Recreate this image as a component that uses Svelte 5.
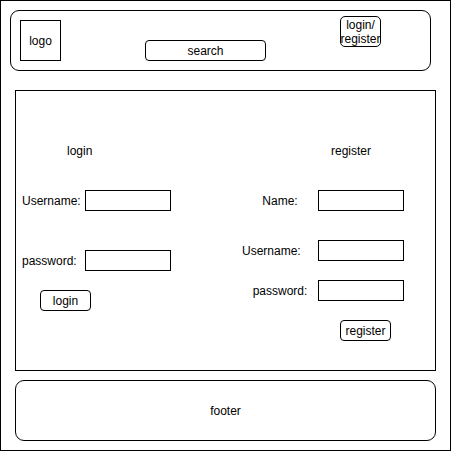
<script>
  const loginFields = [
    { id: 'login-username', label: 'Username:', type: 'text' },
    { id: 'login-password', label: 'password:', type: 'password' },
  ];
  const registerFields = [
    { id: 'register-name', label: 'Name:', type: 'text' },
    { id: 'register-username', label: 'Username:', type: 'text' },
    { id: 'register-password', label: 'password:', type: 'password' },
  ];
  const submit = (event) => event.preventDefault();
</script>

<div class="page">
  <header>
    <div class="logo">logo</div>
    <input class="search" type="text" placeholder="search" aria-label="search" />
    <button class="account" type="button">login/<br />register</button>
  </header>

  <main>
    <form class="login" onsubmit={submit}>
      <h2>login</h2>
      {#each loginFields as field}
        <div class="field">
          <label for={field.id}>{field.label}</label>
          <input id={field.id} type={field.type} />
        </div>
      {/each}
      <button class="submit" type="submit">login</button>
    </form>

    <form class="register" onsubmit={submit}>
      <h2>register</h2>
      {#each registerFields as field}
        <div class="field">
          <label for={field.id}>{field.label}</label>
          <input id={field.id} type={field.type} />
        </div>
      {/each}
      <button class="submit" type="submit">register</button>
    </form>
  </main>

  <footer>footer</footer>
</div>

<style>
  :global(body) {
    margin: 0;
    background: #fff;
  }

  .page,
  .page * {
    box-sizing: border-box;
  }

  .page {
    padding: 9px 14px 9px 9px;
    border: 1px solid #000;
    color: #000;
    font: 12px/14px 'Liberation Sans', Arial, Helvetica, sans-serif;
  }

  input,
  button {
    margin: 0;
    padding: 0;
    border: 1px solid #000;
    border-radius: 0;
    background: #fff;
    color: inherit;
    font: inherit;
  }

  header {
    display: flex;
    align-items: flex-end;
    justify-content: space-between;
    min-height: 61px;
    margin-right: 5px;
    padding: 5px 49px 9px 9px;
    border: 1px solid #000;
    border-radius: 9px;
  }

  .logo {
    display: flex;
    align-items: center;
    justify-content: center;
    width: 41px;
    height: 41px;
    border: 1px solid #000;
  }

  .search {
    width: 121px;
    height: 21px;
    margin-left: 10px;
    border-radius: 4px;
    text-align: center;
  }

  .search::placeholder {
    color: #000;
    opacity: 1;
  }

  .account {
    display: flex;
    align-items: center;
    justify-content: center;
    align-self: flex-start;
    width: 41px;
    height: 31px;
    border-radius: 5px;
  }

  main {
    display: flex;
    justify-content: space-between;
    margin: 19px 0 9px 5px;
    padding: 53px 31px 29px 6px;
    border: 1px solid #000;
  }

  form {
    display: flex;
    flex-direction: column;
    align-items: flex-start;
  }

  h2 {
    margin: 0 0 32px;
    font: inherit;
  }

  .field {
    display: flex;
    align-items: center;
    margin-bottom: 19px;
  }

  .field input {
    width: 86px;
    height: 21px;
  }

  .submit {
    width: 51px;
    height: 21px;
    border-radius: 4px;
    text-align: center;
  }

  .login h2 {
    margin-left: 45px;
  }

  .login label {
    width: 63px;
  }

  .login h2 + .field {
    margin-bottom: 39px;
  }

  .login .submit {
    margin-left: 18px;
  }

  .register h2 {
    margin-left: 89px;
  }

  .register label {
    width: 76px;
    text-align: center;
  }

  .register h2 + .field {
    margin-bottom: 29px;
  }

  .register .field + .field label[for='register-username'] {
    text-align: left;
  }

  .register .submit {
    margin-left: 98px;
  }

  footer {
    display: flex;
    align-items: center;
    justify-content: center;
    min-height: 61px;
    margin-left: 5px;
    border: 1px solid #000;
    border-radius: 9px;
  }
</style>
